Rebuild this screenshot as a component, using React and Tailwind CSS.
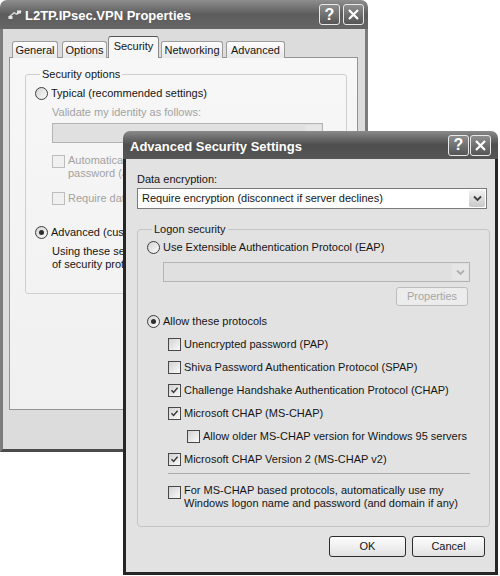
import React from "react";

function Radio({ checked }) {
  return (
    <span className="flex h-[13px] w-[13px] shrink-0 items-center justify-center rounded-full border border-[#3c3c3c] bg-linear-to-br from-[#d4d4d4] to-[#fbfbfb]">
      {checked && <span className="h-[5px] w-[5px] rounded-full bg-[#2e2e2e]" />}
    </span>
  );
}

function Checkbox({ checked, disabled }) {
  return (
    <span
      className={`flex h-[13px] w-[13px] shrink-0 items-center justify-center border ${
        disabled
          ? "border-[#bdbdbd] bg-[#f0f0f0]"
          : "border-[#484848] bg-linear-to-br from-[#d2d2d2] to-[#fafafa]"
      }`}
    >
      {checked && (
        <svg width="9" height="9" viewBox="0 0 9 9">
          <path d="M1.5 4.2 L3.6 6.4 L7.6 1.8" fill="none" stroke="#3a3a3a" strokeWidth="1.5" />
        </svg>
      )}
    </span>
  );
}

function Chevron({ color = "#4a4a4a" }) {
  return (
    <svg width="9" height="7" viewBox="0 0 9 7">
      <path d="M1 1.5 L4.5 5 L8 1.5" fill="none" stroke={color} strokeWidth="1.8" />
    </svg>
  );
}

function Select({ value, disabled, className }) {
  return (
    <div
      className={`flex items-center border ${
        disabled ? "border-[#b4b4b4] bg-[#e0e0e0]" : "border-[#7a7a7a] bg-white"
      } ${className}`}
    >
      <span className="flex-1 truncate pl-[4px]">{value}</span>
      <span
        className={`m-[1px] flex w-[16px] self-stretch items-center justify-center rounded-[2px] ${
          disabled ? "bg-[#e6e6e6]" : "bg-linear-to-b from-[#f2f2f2] to-[#c9c9c9]"
        }`}
      >
        <Chevron color={disabled ? "#b0b0b0" : "#3c3c3c"} />
      </span>
    </div>
  );
}

function CaptionButton({ children }) {
  return (
    <span className="flex h-[21px] w-[21px] items-center justify-center rounded-[3px] border border-[#e8e8e8] bg-linear-to-b from-[#8e8e8e] to-[#555] text-[16px] font-bold leading-none text-white">
      {children}
    </span>
  );
}

function CloseGlyph() {
  return (
    <svg width="13" height="13" viewBox="0 0 13 13">
      <path d="M2 2 L11 11 M11 2 L2 11" stroke="white" strokeWidth="2.2" />
    </svg>
  );
}

function NetIcon() {
  return (
    <svg width="14" height="10" viewBox="0 0 14 10">
      <path d="M1 7 L6 3 L9 4 L13 1" fill="none" stroke="#cfcfcf" strokeWidth="1.6" />
      <rect x="0.5" y="6" width="4" height="3" fill="#e6e6e6" />
      <rect x="9" y="0.5" width="4" height="3" fill="#e6e6e6" />
    </svg>
  );
}

function BackWindow() {
  const tabs = [
    { label: "General", cls: "ml-[3px] w-[46px]" },
    { label: "Options", cls: "ml-[4px] w-[45px]" },
    { label: "Security", cls: "ml-[1px] w-[51px]", active: true },
    { label: "Networking", cls: "ml-[2px] w-[62px]" },
    { label: "Advanced", cls: "ml-[3px] w-[59px]" },
  ];

  return (
    <div className="absolute left-0 top-0 flex h-[452px] w-[368px] flex-col">
      {/* caption */}
      <div className="flex h-[29px] items-center rounded-t-[7px] bg-linear-to-b from-[#8e8e8e] via-[#5c5c5c] to-[#666] pl-[8px] pr-[4px]">
        <NetIcon />
        <span className="ml-[3px] pt-[2px] text-[13px] font-bold text-white">L2TP.IPsec.VPN Properties</span>
        <div className="ml-auto flex gap-[3px]">
          <CaptionButton>?</CaptionButton>
          <CaptionButton>
            <CloseGlyph />
          </CaptionButton>
        </div>
      </div>

      <div className="flex flex-1 flex-col border-x-[3px] border-b-[3px] border-x-[#7c7c7c] border-b-[#4a4a4a] bg-[#dcdcdc] pl-[6px] pr-[7px] pt-[7px]">
        {/* tabs */}
        <div className="relative z-10 -mb-px flex h-[22px] items-end">
          {tabs.map((t) => (
            <div
              key={t.label}
              className={`${t.cls} flex items-center justify-center rounded-t-[3px] border border-b-0 ${
                t.active
                  ? "h-[22px] border-[#8a8a8a] border-t-[#555] bg-[#f6f6f6] pb-[2px]"
                  : "h-[17px] border-[#9c9c9c] border-b bg-linear-to-b from-[#fdfdfd] to-[#e8e8e8]"
              }`}
            >
              {t.label}
            </div>
          ))}
        </div>

        {/* panel */}
        <div className="h-[353px] border border-[#949494] bg-linear-to-b from-[#f7f7f7] to-[#f0f0f0] pl-[15px] pr-[10px] pt-[10px]">
          <fieldset className="rounded-[3px] border border-[#cfcfcf] pb-[22px] pl-[9px]">
            <legend className="ml-[5px] px-[2px]">Security options</legend>
            <div className="mt-[5px] flex h-[14px] items-center gap-[3px]">
              <Radio />
              <span>Typical (recommended settings)</span>
            </div>
            <div className="ml-[17px] mt-[6px] text-[#a2a2a2]">Validate my identity as follows:</div>
            <Select disabled className="ml-[17px] mt-[4px] h-[20px] w-[271px]" value="" />
            <div className="ml-[17px] mt-[11px] flex items-start gap-[3px] text-[#a2a2a2]">
              <span className="pt-[1px]">
                <Checkbox disabled />
              </span>
              <span className="w-[240px]">Automatically use my Windows logon name and password (and domain if any)</span>
            </div>
            <div className="ml-[17px] mt-[12px] flex items-center gap-[3px] text-[#a2a2a2]">
              <Checkbox disabled />
              <span>Require data encryption (disconnect if none)</span>
            </div>
            <div className="mt-[20px] flex h-[14px] items-center gap-[3px]">
              <Radio checked />
              <span>Advanced (custom settings)</span>
            </div>
            <div className="ml-[17px] mt-[6px] w-[210px]">
              Using these settings requires a knowledge of security protocols.
            </div>
          </fieldset>
        </div>
      </div>
    </div>
  );
}

function FrontWindow() {
  const protocols = [
    { label: "Unencrypted password (PAP)" },
    { label: "Shiva Password Authentication Protocol (SPAP)" },
    { label: "Challenge Handshake Authentication Protocol (CHAP)", checked: true },
    { label: "Microsoft CHAP (MS-CHAP)", checked: true },
    { label: "Allow older MS-CHAP version for Windows 95 servers", nested: true },
    { label: "Microsoft CHAP Version 2 (MS-CHAP v2)", checked: true },
  ];

  return (
    <div className="absolute left-[123px] top-[131px] flex h-[444px] w-[375px] flex-col">
      {/* caption */}
      <div className="flex h-[28px] items-center rounded-t-[7px] bg-linear-to-b from-[#8a8a8a] via-[#4e4e4e] to-[#565656] pl-[7px] pr-[7px]">
        <span className="pt-[2px] text-[13px] font-bold text-white">Advanced Security Settings</span>
        <div className="ml-auto flex gap-[1px]">
          <CaptionButton>?</CaptionButton>
          <CaptionButton>
            <CloseGlyph />
          </CaptionButton>
        </div>
      </div>

      <div className="flex flex-1 flex-col border-x-[3px] border-b-[3px] border-[#262626] bg-[#e2e2e2] pl-[11px] pr-[8px] pt-[14px]">
        <div>Data encryption:</div>
        <Select className="mt-[2px] h-[21px]" value="Require encryption (disconnect if server declines)" />

        <fieldset className="mt-[14px] rounded-[4px] border border-[#c4c4c4] pb-[16px] pl-[9px] pr-[19px]">
          <legend className="ml-[5px] px-[2px]">Logon security</legend>
          <div className="mt-[4px] flex h-[14px] items-center gap-[3px]">
            <Radio />
            <span>Use Extensible Authentication Protocol (EAP)</span>
          </div>
          <Select disabled className="ml-[16px] mt-[8px] h-[20px]" value="" />
          <div className="mt-[5px] flex justify-end pr-[2px]">
            <span className="flex h-[19px] w-[72px] items-center justify-center rounded-[3px] border border-[#bcbcbc] bg-[#ececec] text-[#a6a6a6]">
              Properties
            </span>
          </div>
          <div className="mt-[8px] flex h-[14px] items-center gap-[3px]">
            <Radio checked />
            <span>Allow these protocols</span>
          </div>
          <div className="mt-[5px] flex flex-col">
            {protocols.map((p) => (
              <div
                key={p.label}
                className={`flex h-[23px] items-center gap-[3px] ${p.nested ? "ml-[40px]" : "ml-[21px]"}`}
              >
                <Checkbox checked={p.checked} />
                <span>{p.label}</span>
              </div>
            ))}
          </div>
          <div className="ml-[21px] mt-[2px] h-px w-[302px] bg-[#ababab]" />
          <div className="ml-[21px] mt-[10px] flex items-start gap-[3px]">
            <span className="pt-[2px]">
              <Checkbox />
            </span>
            <span>
              For MS-CHAP based protocols, automatically use my
              <br />
              Windows logon name and password (and domain if any)
            </span>
          </div>
        </fieldset>

        <div className="mt-[9px] flex justify-end gap-[6px] pr-[2px]">
          <span className="flex h-[21px] w-[77px] items-center justify-center rounded-[3px] border border-[#2c2c2c] bg-linear-to-b from-[#fdfdfd] to-[#e2e2e2]">
            OK
          </span>
          <span className="flex h-[21px] w-[73px] items-center justify-center rounded-[3px] border border-[#2c2c2c] bg-linear-to-b from-[#fdfdfd] to-[#e2e2e2]">
            Cancel
          </span>
        </div>
      </div>
    </div>
  );
}

export default function App() {
  return (
    <div className="relative h-[576px] w-[500px] overflow-hidden bg-white font-['Liberation_Sans',Arial,sans-serif] text-[11px] leading-[13px] text-[#151515]">
      <BackWindow />
      <FrontWindow />
    </div>
  );
}
